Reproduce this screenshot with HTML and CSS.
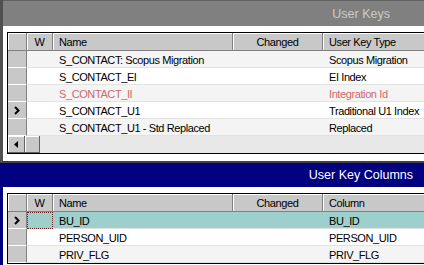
FILE: index.html
```html
<!DOCTYPE html>
<html lang="en">
<head>
    <meta charset="UTF-8">
    <title>User Keys</title>
    <link rel="stylesheet" href="styles.css">
</head>
<body>
    <!-- User Keys applet -->
    <div class="panel panel-keys">
        <div class="titlebar">User Keys</div>
        <div class="panel-body">
            <div class="grid">
                <div class="row head">
                    <div class="cell rh"></div>
                    <div class="cell w">W</div>
                    <div class="cell name">Name</div>
                    <div class="cell changed">Changed</div>
                    <div class="cell type">User Key Type</div>
                </div>
                <div class="row odd">
                    <div class="cell rh"></div>
                    <div class="cell w"></div>
                    <div class="cell name">S_CONTACT: Scopus Migration</div>
                    <div class="cell changed"></div>
                    <div class="cell type">Scopus Migration</div>
                </div>
                <div class="row">
                    <div class="cell rh"></div>
                    <div class="cell w"></div>
                    <div class="cell name">S_CONTACT_EI</div>
                    <div class="cell changed"></div>
                    <div class="cell type">EI Index</div>
                </div>
                <div class="row odd inactive">
                    <div class="cell rh"></div>
                    <div class="cell w"></div>
                    <div class="cell name">S_CONTACT_II</div>
                    <div class="cell changed"></div>
                    <div class="cell type">Integration Id</div>
                </div>
                <div class="row">
                    <div class="cell rh">
                        <svg class="marker" viewBox="0 0 6 9"><polyline points="1,1 4.5,4.5 1,8" /></svg>
                    </div>
                    <div class="cell w"></div>
                    <div class="cell name">S_CONTACT_U1</div>
                    <div class="cell changed"></div>
                    <div class="cell type">Traditional U1 Index</div>
                </div>
                <div class="row odd">
                    <div class="cell rh"></div>
                    <div class="cell w"></div>
                    <div class="cell name">S_CONTACT_U1 - Std Replaced</div>
                    <div class="cell changed"></div>
                    <div class="cell type">Replaced</div>
                </div>
                <div class="hscroll">
                    <div class="sb-btn">
                        <svg class="arrow" viewBox="0 0 4 7"><polygon points="4,0 0,3.5 4,7" /></svg>
                    </div>
                    <div class="sb-thumb"></div>
                </div>
            </div>
        </div>
    </div>

    <!-- User Key Columns applet -->
    <div class="panel panel-columns">
        <div class="titlebar">User Key Columns</div>
        <div class="panel-body">
            <div class="grid">
                <div class="row head">
                    <div class="cell rh"></div>
                    <div class="cell w">W</div>
                    <div class="cell name">Name</div>
                    <div class="cell changed">Changed</div>
                    <div class="cell type">Column</div>
                </div>
                <div class="row selected">
                    <div class="cell rh">
                        <svg class="marker" viewBox="0 0 6 9"><polyline points="1,1 4.5,4.5 1,8" /></svg>
                    </div>
                    <div class="cell w focus"></div>
                    <div class="cell name">BU_ID</div>
                    <div class="cell changed"></div>
                    <div class="cell type">BU_ID</div>
                </div>
                <div class="row">
                    <div class="cell rh"></div>
                    <div class="cell w"></div>
                    <div class="cell name">PERSON_UID</div>
                    <div class="cell changed"></div>
                    <div class="cell type">PERSON_UID</div>
                </div>
                <div class="row odd">
                    <div class="cell rh"></div>
                    <div class="cell w"></div>
                    <div class="cell name">PRIV_FLG</div>
                    <div class="cell changed"></div>
                    <div class="cell type">PRIV_FLG</div>
                </div>
            </div>
        </div>
    </div>
</body>
</html>
```

FILE: styles.css
```css
/* General Styles */
body {
    margin: 0;
    width: 424px;
    height: 265px;
    overflow: hidden;
    background: #fff;
    font-family: 'Liberation Sans', Arial, sans-serif;
    font-size: 11px;
    letter-spacing: -0.4px;
    color: #000;
}

.panel {
    background: #fff;
}

.panel-keys {
    border-left: 3px solid #505050;
    border-bottom: 2px solid #404040;
}

.panel-columns {
    border-left: 3px solid #000080;
}

.titlebar {
    text-align: right;
    font-size: 12.5px;
    letter-spacing: 0;
}

.panel-keys .titlebar {
    height: 25px;
    line-height: 26px;
    border-top: 1px solid #606060;
    background: #808080;
    color: #cacaca;
    padding-right: 34px;
}

.panel-columns .titlebar {
    height: 24px;
    line-height: 25px;
    background: #000080;
    color: #fff;
    padding-right: 11px;
}

.panel-body {
    padding: 6px 0 6px 4px;
    overflow: hidden;
}

.panel-keys .panel-body {
    padding-bottom: 7px;
}

/* Grid */
.grid {
    width: 520px;
    border: 1px solid #000;
}

.row {
    display: flex;
    height: 17px;
}

.cell {
    box-sizing: border-box;
    height: 17px;
    padding: 2px 6px 0;
    line-height: 15px;
    white-space: nowrap;
    overflow: hidden;
    border-bottom: 1px solid #e2e2e2;
}

.cell.rh { width: 19px; padding: 0; }
.cell.w { width: 26px; }
.cell.name { width: 180px; }
.cell.changed { width: 90px; }
.cell.type { flex: 1; }

.row.odd .cell { background: #f4f4f4; }
.row.inactive .cell { color: #cd6a6a; }
.row.selected .cell { background: #9dcfcd; }

.row .cell.rh {
    background: #c8c8c8;
    border-right: 1px solid #808080;
    border-bottom: 1px solid #fff;
    display: flex;
    align-items: center;
    justify-content: center;
}

.row.head {
    height: 18px;
}

.row.head .cell {
    height: 18px;
    padding-top: 2px;
    background: #c8c8c8;
    border-right: 1px solid #808080;
    border-bottom: 1px solid #808080;
    box-shadow: inset 1px 1px 0 #fff;
}

.row.head .cell.w,
.row.head .cell.changed {
    text-align: center;
}

.cell.focus {
    border: 1px dotted #6b1f1f;
}

.marker {
    width: 6px;
    height: 9px;
    fill: none;
    stroke: #000;
    stroke-width: 2;
}

/* Horizontal scroll bar */
.hscroll {
    display: flex;
    height: 17px;
    background: #e8e8e8;
}

.sb-btn,
.sb-thumb {
    box-sizing: border-box;
    height: 17px;
    background: #c8c8c8;
    border-right: 1px solid #606060;
    border-bottom: 1px solid #606060;
    box-shadow: inset 1px 1px 0 #fff;
}

.sb-btn {
    width: 17px;
    display: flex;
    align-items: center;
    justify-content: center;
}

.sb-thumb {
    width: 15px;
}

.arrow {
    width: 4px;
    height: 7px;
    fill: #000;
}
```
